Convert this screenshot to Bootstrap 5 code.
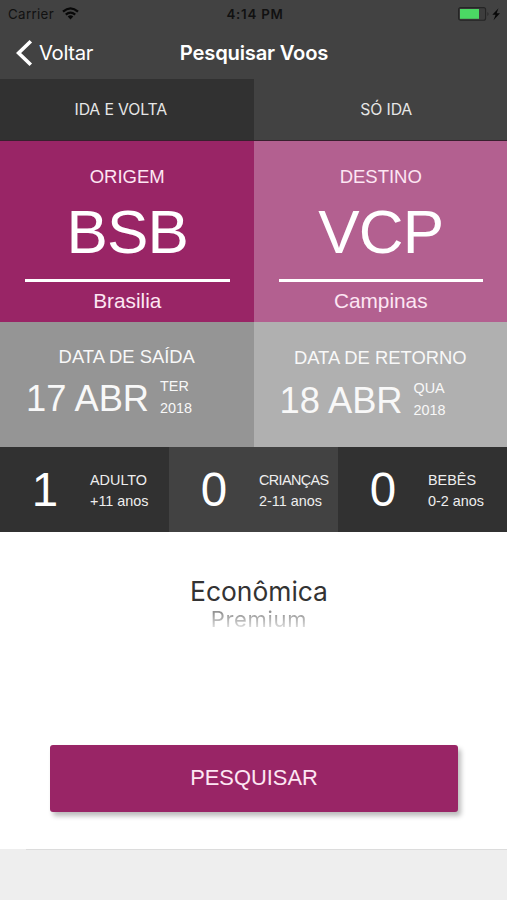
<!DOCTYPE html>
<html lang="pt-BR">
<head>
<meta charset="utf-8">
<meta name="viewport" content="width=device-width, initial-scale=1">
<title>Pesquisar Voos</title>
<link rel="stylesheet" href="https://cdn.jsdelivr.net/npm/bootstrap@5.3.0/dist/css/bootstrap.min.css">
<style>
body { font-family: "Liberation Sans", Arial, sans-serif; background: #eee; color: #fff; white-space: nowrap; overflow: hidden; line-height: 20px; }
.ui { font-family: Inter, sans-serif; }
.screen { height: 900px; }
.top-area { background: #424242; height: 79px; }
.status { height: 27px; color: #111; font-size: 13.3px; padding: 0 5px 0 8px; }
.status > div, .title-bar > div { flex: 1 1 0; }
.carrier { letter-spacing: .35px; }
.clock { font-weight: 600; letter-spacing: .75px; }
.title-bar { height: 52px; font-size: 20.3px; padding: 0 14px 0 15px; }
.back-text { margin-left: 6px; letter-spacing: -.35px; }
.page-title { font-weight: 600; font-size: 20.2px; letter-spacing: -.2px; }
.tabs { height: 62px; font-size: 15.8px; letter-spacing: -.15px; border-bottom: 1px solid #38202e; color: #e6e6e6; }
.tab-a { padding-right: 12px; }
.tab-b { padding-left: 12px; }
.dark { background: #313131; }
.mid { background: #424242; }
.route { height: 181px; padding: 26px 24px 0 25px; }
.from { background: #992566; }
.to { background: #b36090; }
.label { font-size: 18.5px; color: #fde6f3; }
.code { font-size: 62px; letter-spacing: -.8px; line-height: 70px; margin-top: 10px; }
.rule { height: 3px; background: #fff; margin-top: 12px; }
.city { font-size: 20.8px; line-height: 24px; margin-top: 7px; color: #fde6f3; }
.date { height: 125px; padding-top: 25px; color: #f8f8f8; }
.ret { padding-top: 26px; background: #b0b0b0; }
.dep { background: #959595; }
.date-label { font-size: 18.4px; }
.day { font-size: 36.3px; line-height: 40px; padding-left: 26px; width: 160px; margin-top: 3px; }
.day-info { font-size: 14.4px; line-height: 21.5px; }
.date-row { margin-top: 9px; }
.ret .date-row { margin-top: 10px; }
.pax { height: 85px; }
.num { width: 90px; font-size: 47.5px; padding-top: 1px; }
.pax-text { font-size: 14.4px; line-height: 21.3px; color: #eee; padding-top: 3px; }
.kids { letter-spacing: -.6px; }
.panel { height: 317px; background: #fff; }
.selected { font-size: 26.4px; line-height: 30px; color: #333; padding-top: 44px; }
.next { font-size: 22px; letter-spacing: .7px; line-height: 26px; background: linear-gradient(#949494 25%, #dedede 85%); -webkit-background-clip: text; background-clip: text; color: transparent; }
.picker { height: 213px; padding-left: 11px; }
.search { width: 408px; height: 67px; margin-left: 50px; border-radius: 3px; background: #992566; color: #fde6f3; font-size: 21.9px; border: 0; box-shadow: 3px 4px 5px rgba(0,0,0,.27); }
.bottom-line { height: 1px; margin-left: 26px; background: #dcdcdc; }
</style>
<script src="https://cdn.jsdelivr.net/npm/bootstrap@5.3.0/dist/js/bootstrap.bundle.min.js"></script>
</head>
<body>
<main class="screen">
  <header class="top-area ui">
    <div class="status d-flex align-items-center">
      <div class="d-flex align-items-center"><span class="carrier">Carrier</span>
        <svg class="ms-2" width="17" height="13" viewBox="0 0 17 13" fill="none" stroke="#080808" stroke-width="2.3"><path d="M1 4.6Q8.5-1.8 16 4.6M3.800 7.600Q8.500 3.600 13.200 7.600"/><path fill="#080808" stroke="none" d="M5.700 9.500Q8.500 7.200 11.300 9.500L8.500 12.500Z"/></svg>
      </div>
      <span class="clock">4:14 PM</span>
      <div class="d-flex justify-content-end">
        <svg width="45" height="16" viewBox="0 0 45 16"><rect x="1.6" y="1.6" width="27" height="12.6" rx="2" fill="#3d3d3d" stroke="#252525" stroke-width="1.1"/><rect x="3" y="3" width="19" height="9.800" fill="#4bd964"/><path d="M30.500 6q2 2 0 4z" fill="#252525"/><path d="M41.500 2.300L35.300 8.800H38.600L36.500 14.200L43 7.200H39.600Z" fill="#080808"/></svg>
      </div>
    </div>
    <div class="title-bar d-flex align-items-center">
      <div class="d-flex align-items-center">
        <svg width="18" height="28" viewBox="0 0 18 28" fill="none" stroke="#fff" stroke-width="3.6"><path d="M15.800 2.200L3.600 14L15.800 25.800"/></svg>
        <span class="back-text">Voltar</span>
      </div>
      <span class="page-title">Pesquisar Voos</span>
      <div></div>
    </div>
  </header>
  <nav class="row g-0 tabs ui text-center">
    <div class="col-6 dark d-flex align-items-center justify-content-center"><span class="tab-a">IDA E VOLTA</span></div>
    <div class="col-6 mid d-flex align-items-center justify-content-center"><span class="tab-b">SÓ IDA</span></div>
  </nav>
  <section class="row g-0 text-center">
    <div class="col-6 route from"><div class="label">ORIGEM</div><div class="code">BSB</div><div class="rule"></div><div class="city">Brasilia</div></div>
    <div class="col-6 route to"><div class="label">DESTINO</div><div class="code">VCP</div><div class="rule"></div><div class="city">Campinas</div></div>
  </section>
  <section class="row g-0">
    <div class="col-6 date dep"><div class="date-label text-center">DATA DE SAÍDA</div><div class="date-row d-flex"><div class="day">17 ABR</div><div class="day-info">TER<br>2018</div></div></div>
    <div class="col-6 date ret"><div class="date-label text-center">DATA DE RETORNO</div><div class="date-row d-flex"><div class="day">18 ABR</div><div class="day-info">QUA<br>2018</div></div></div>
  </section>
  <section class="row g-0">
    <div class="col-4 pax dark d-flex align-items-center"><div class="num text-center">1</div><div class="pax-text">ADULTO<br>+11 anos</div></div>
    <div class="col-4 pax mid d-flex align-items-center"><div class="num text-center">0</div><div class="pax-text"><span class="kids">CRIANÇAS</span><br>2-11 anos</div></div>
    <div class="col-4 pax dark d-flex align-items-center"><div class="num text-center">0</div><div class="pax-text">BEBÊS<br>0-2 anos</div></div>
  </section>
  <section class="panel">
    <div class="picker ui text-center"><div class="selected">Econômica</div><div class="next">Premium</div></div>
    <button type="button" class="btn search d-block p-0">PESQUISAR</button>
  </section>
  <div class="bottom-line"></div>
</main>
</body>
</html>
